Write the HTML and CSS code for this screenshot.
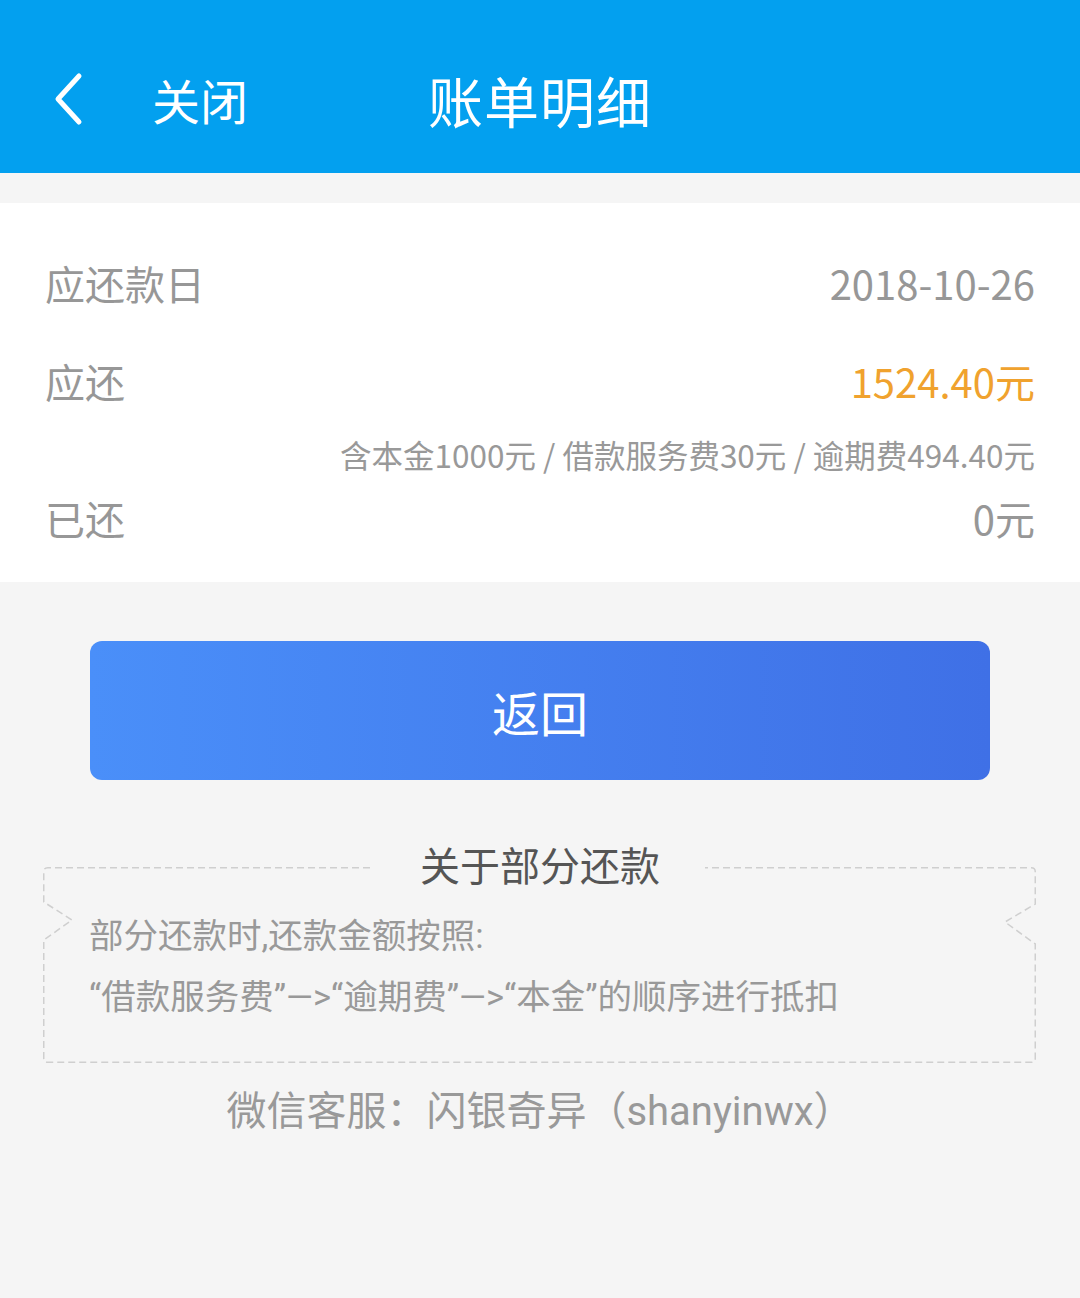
FILE: index.html
```html
<!DOCTYPE html>
<html lang="zh-CN">
<head>
  <meta charset="UTF-8">
  <meta name="viewport" content="width=device-width, initial-scale=1.0">
  <title>账单明细</title>
  <link rel="stylesheet" href="styles.css">
</head>
<body>
  <header class="top-bar">
    <div class="top-left">
      <svg class="back-icon" width="36" height="56" viewBox="0 0 36 56">
        <path d="M27 5 L6 28 L27 51" fill="none" stroke="#fff" stroke-width="5" stroke-linecap="round" stroke-linejoin="round"/>
      </svg>
      <span class="close-text">关闭</span>
    </div>
    <h1 class="page-title">账单明细</h1>
    <div></div>
  </header>

  <section class="bill-panel">
    <div class="bill-row">
      <span class="bill-label">应还款日</span>
      <span class="bill-value">2018-10-26</span>
    </div>
    <div class="bill-row row-due">
      <span class="bill-label">应还</span>
      <span class="bill-value highlight">1524.40元</span>
    </div>
    <div class="bill-detail">含本金1000元 / 借款服务费30元 / 逾期费494.40元</div>
    <div class="bill-row row-paid">
      <span class="bill-label">已还</span>
      <span class="bill-value">0元</span>
    </div>
  </section>

  <button class="back-button">返回</button>

  <section class="notice">
    <svg class="notice-frame" width="993" height="196" viewBox="0 0 993 196">
      <path d="M327 0.75 H4.75 Q0.75 0.75 0.75 4.75 V35 L29 53 L0.75 73 V191.25 Q0.75 195.25 4.75 195.25 H988.25 Q992.25 195.25 992.25 191.25 V77 L962 55 L992.25 37 V4.75 Q992.25 0.75 988.25 0.75 H662"
        fill="none" stroke="#cfcfcf" stroke-width="1.5" stroke-dasharray="7 4"/>
    </svg>
    <h2 class="notice-title">关于部分还款</h2>
    <p class="notice-text">部分还款时,还款金额按照:</p>
    <p class="notice-text">“借款服务费”—>“逾期费”—>“本金”的顺序进行抵扣</p>
  </section>

  <p class="service">微信客服：闪银奇异（shanyinwx）</p>
</body>
</html>
```

FILE: styles.css
```css
body {
  margin: 0;
  background-color: #f5f5f5;
  font-family: "Noto Sans CJK SC", "Noto Sans", sans-serif;
}
.top-bar {
  display: grid;
  grid-template-columns: 1fr auto 1fr;
  align-items: center;
  height: 139px;
  padding-top: 29px;
  padding-bottom: 5px;
  background-color: #03a0ef;
  color: white;
}
.top-left {
  display: flex;
  align-items: center;
  padding-left: 52px;
}
.back-icon {
  display: block;
}
.close-text {
  margin-left: 64px;
  font-size: 48px;
  line-height: 60px;
}
.page-title {
  margin: 0;
  font-size: 55px;
  font-weight: normal;
  line-height: 70px;
  letter-spacing: 1px;
}
.bill-panel {
  margin-top: 30px;
  padding: 52px 45px 36px 45px;
  background-color: white;
}
.bill-row {
  display: flex;
  justify-content: space-between;
  align-items: center;
  font-size: 40px;
  line-height: 56px;
  color: #979797;
}
.row-due {
  margin-top: 42px;
}
.row-paid {
  margin-top: 16px;
}
.bill-value {
  font-size: 40px;
}
.highlight {
  color: #f0a22e;
}
.bill-detail {
  margin-top: 25px;
  text-align: right;
  font-size: 31.5px;
  line-height: 40px;
  color: #999;
}
.back-button {
  display: block;
  width: 900px;
  height: 139px;
  margin: 59px 90px 0 90px;
  padding: 0;
  border: none;
  border-radius: 12px;
  background: linear-gradient(to right, #4a8ff9, #3f70e6);
  color: white;
  font-family: "Noto Sans CJK SC", sans-serif;
  font-size: 48px;
  cursor: pointer;
}
.notice {
  position: relative;
  display: flow-root;
  height: 196px;
  margin: 87px 43px 0 43px;
  box-sizing: border-box;
  padding: 0 0 0 46px;
}
.notice-frame {
  position: absolute;
  left: 0;
  top: 0;
}
.notice-title {
  position: relative;
  margin: -31px 0 0 -46px;
  text-align: center;
  font-size: 40px;
  font-weight: normal;
  line-height: 56px;
  color: #555;
}
.notice-text {
  position: relative;
  margin: 0;
  font-family: Roboto, "Noto Sans CJK SC", sans-serif;
  font-size: 34.5px;
  line-height: 61px;
  color: #999;
}
.notice-title + .notice-text {
  margin-top: 14px;
}
.service {
  margin: 24px 0 0 0;
  text-align: center;
  font-family: Roboto, "Noto Sans CJK SC", sans-serif;
  font-size: 40px;
  line-height: 50px;
  color: #999;
}
```
